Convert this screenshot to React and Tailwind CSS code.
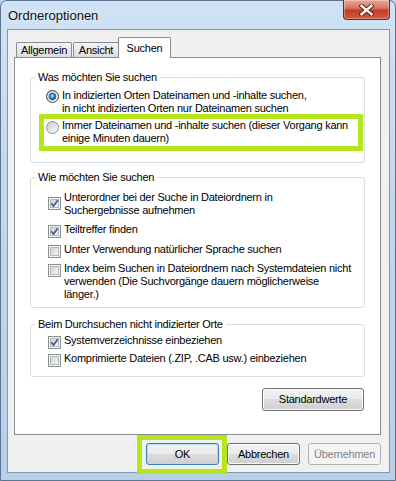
import React from "react";

const body =
  "font-['Liberation_Sans',Arial,sans-serif] text-[11px] leading-[13px] tracking-[-0.25px] text-black";

function CheckBox({ checked, className = "" }) {
  return (
    <svg width="13" height="13" viewBox="0 0 13 13" className={`shrink-0 ${className}`}>
      <defs>
        <linearGradient id="cbFill" x1="0" y1="0" x2="1" y2="1">
          <stop offset="0" stopColor="#cdd1d6" />
          <stop offset="1" stopColor="#f7f7f7" />
        </linearGradient>
      </defs>
      <rect x="0.5" y="0.5" width="12" height="12" fill="#f5f5f5" stroke="#8e8f8f" />
      <rect x="2.5" y="2.5" width="8" height="8" fill="url(#cbFill)" stroke="#b4b9bf" />
      {checked && (
        <path d="M3.3 6.3 L5.5 9 L9.8 3.2" fill="none" stroke="#4b5e94" strokeWidth="1.8" />
      )}
    </svg>
  );
}

function Radio({ checked, className = "" }) {
  return (
    <svg width="13" height="13" viewBox="0 0 13 13" className={`shrink-0 ${className}`}>
      <defs>
        <linearGradient id="rbFill" x1="0" y1="0" x2="1" y2="1">
          <stop offset="0" stopColor="#c8cbd0" />
          <stop offset="1" stopColor="#fbfbfb" />
        </linearGradient>
        <radialGradient id="rbDot" cx="0.45" cy="0.4" r="0.6">
          <stop offset="0" stopColor="#a8ecff" />
          <stop offset="0.55" stopColor="#2f90d6" />
          <stop offset="1" stopColor="#14427a" />
        </radialGradient>
      </defs>
      <circle cx="6.5" cy="6.5" r="6" fill="url(#rbFill)" stroke={checked ? "#404040" : "#8e8f8f"} />
      {checked && <circle cx="6.5" cy="6.5" r="3.3" fill="url(#rbDot)" stroke="#1a4c82" strokeWidth="0.8" />}
    </svg>
  );
}

function Group({ title, className = "", children }) {
  return (
    <fieldset className={`min-w-0 rounded-[3px] border border-[#d5dfe5] ${className}`}>
      <legend className="ml-[4px] px-[3px] leading-[13px]">{title}</legend>
      {children}
    </fieldset>
  );
}

// checkbox box is nudged down with a matching negative bottom margin so rows stay one line tall
function Check({ checked, boxTop = "mt-[2px] mb-[-2px]", className = "", children }) {
  return (
    <div className={`ml-[17px] flex items-start whitespace-nowrap ${className}`}>
      <CheckBox checked={checked} className={boxTop} />
      <span className="pl-[3px]">{children}</span>
    </div>
  );
}

const btnFace =
  "flex h-[22px] items-center justify-center rounded-[3px] bg-[linear-gradient(#f2f2f2_0%,#ebebeb_50%,#dddddd_50%,#cfcfcf_100%)]";

function CloseButton() {
  return (
    <div className="-mt-px flex h-[20px] w-[47px] items-center justify-center rounded-b-[4px] border border-t-0 border-[#6a2a22] bg-[linear-gradient(180deg,#e9a898_0%,#d77560_42%,#c13f26_55%,#cf5c3c_100%)] shadow-[inset_0_0_0_1px_rgba(255,255,255,0.3)]">
      <svg width="15" height="12" viewBox="0 0 15 12">
        <path d="M2.5 1.8 L12.5 10.2 M12.5 1.8 L2.5 10.2" stroke="#4a1d16" strokeWidth="4.2" strokeLinecap="square" />
        <path d="M2.5 1.8 L12.5 10.2 M12.5 1.8 L2.5 10.2" stroke="#ffffff" strokeWidth="2.4" strokeLinecap="square" />
      </svg>
    </div>
  );
}

export default function App() {
  return (
    <div className="h-[481px] w-[396px] overflow-hidden bg-[#b9d1ea]">
      <div
        className={`flex h-full flex-col rounded-t-[7px] border border-[#5e7591] bg-[linear-gradient(180deg,#d0e2f5_0%,#c2d8ef_40%,#b7cfe9_100%)] pb-[7px] pl-[6px] pr-[5px] ${body}`}
      >
        {/* Title bar */}
        <div className="flex h-[28px] shrink-0 items-start justify-between">
          <div className="pl-px pt-[7px] text-[13px] leading-[15px] tracking-normal text-[#111] [text-shadow:0_0_6px_#fff]">
            Ordneroptionen
          </div>
          <CloseButton />
        </div>

        {/* Client area */}
        <div className="flex flex-1 flex-col border border-[#8497ad] bg-[#f0f0f0] pb-[7px] pt-[7px]">
          {/* Tabs */}
          <div className="flex h-[20px] items-end pl-[8px]">
            <div className="flex h-[15px] w-[56px] items-center justify-center rounded-t-[2px] border border-b-0 border-[#898c95] bg-[linear-gradient(#f4f4f4,#dcdcdc)]">
              Allgemein
            </div>
            <div className="ml-px flex h-[15px] w-[46px] items-center justify-center rounded-t-[2px] border border-b-0 border-[#898c95] bg-[linear-gradient(#f4f4f4,#dcdcdc)]">
              Ansicht
            </div>
            <div className="relative z-10 -ml-px mb-[-1px] flex h-[21px] w-[53px] items-center justify-center rounded-t-[2px] border border-b-0 border-[#898c95] bg-white">
              Suchen
            </div>
          </div>

          {/* Tab panel */}
          <div className="ml-[6px] mr-[8px] flex h-[378px] flex-col border border-[#898c95] bg-white px-[15px] pt-[13px]">
            <Group title="Was möchten Sie suchen" className="pb-[11px]">
              <div className="ml-[15px] mt-[5px] flex items-start whitespace-nowrap">
                <Radio checked className="mt-[1px]" />
                <span className="pl-[3px]">
                  In indizierten Orten Dateinamen und -inhalte suchen,
                  <br />
                  in nicht indizierten Orten nur Dateinamen suchen
                </span>
              </div>
              <div className="-mt-px ml-[8px] mr-px flex items-start whitespace-nowrap border-[5px] border-[#b5e61d] pb-px pl-[2px]">
                <Radio className="mt-[2px]" />
                <span className="pl-[3px]">
                  Immer Dateinamen und -inhalte suchen (dieser Vorgang kann
                  <br />
                  einige Minuten dauern)
                </span>
              </div>
            </Group>

            <Group title="Wie möchten Sie suchen" className="mt-[8px] pb-[6px]">
              <Check checked boxTop="mt-[6px]" className="mt-[7px]">
                Unterordner bei der Suche in Dateiordnern in
                <br />
                Suchergebnisse aufnehmen
              </Check>
              <Check checked className="mt-[6px]">
                Teiltreffer finden
              </Check>
              <Check className="mt-[7px]">Unter Verwendung natürlicher Sprache suchen</Check>
              <Check className="mt-[6px]">
                Index beim Suchen in Dateiordnern nach Systemdateien nicht
                <br />
                verwenden (Die Suchvorgänge dauern möglicherweise
                <br />
                länger.)
              </Check>
            </Group>

            <Group title="Beim Durchsuchen nicht indizierter Orte" className="mt-[10px] pb-[11px]">
              <Check checked className="mt-[3px]">
                Systemverzeichnisse einbeziehen
              </Check>
              <Check className="mt-[5px]">Komprimierte Dateien (.ZIP, .CAB usw.) einbeziehen</Check>
            </Group>

            <button
              className={`${btnFace} mr-px mt-[11px] h-[23px] w-[102px] self-end border border-[#707070] shadow-[inset_0_0_0_1px_#fbfbfb]`}
            >
              Standardwerte
            </button>
          </div>

          {/* Dialog buttons */}
          <div className="mr-[8px] mt-[8px] flex justify-end gap-[8px]">
            <div className="relative">
              <button
                className={`${btnFace} w-[73px] border border-[#3c7fb1] shadow-[inset_0_0_0_1px_#a9ddf6]`}
              >
                OK
              </button>
              <span className="pointer-events-none absolute -bottom-[9px] -left-[9px] -right-[8px] -top-[8px] border-[5px] border-[#b5e61d]" />
            </div>
            <button className={`${btnFace} w-[73px] border border-[#707070] shadow-[inset_0_0_0_1px_#fbfbfb]`}>
              Abbrechen
            </button>
            <button className="flex h-[22px] w-[73px] items-center justify-center rounded-[3px] border border-[#adb2b5] bg-[#f4f4f4] text-[#838383]">
              Übernehmen
            </button>
          </div>
        </div>
      </div>
    </div>
  );
}
